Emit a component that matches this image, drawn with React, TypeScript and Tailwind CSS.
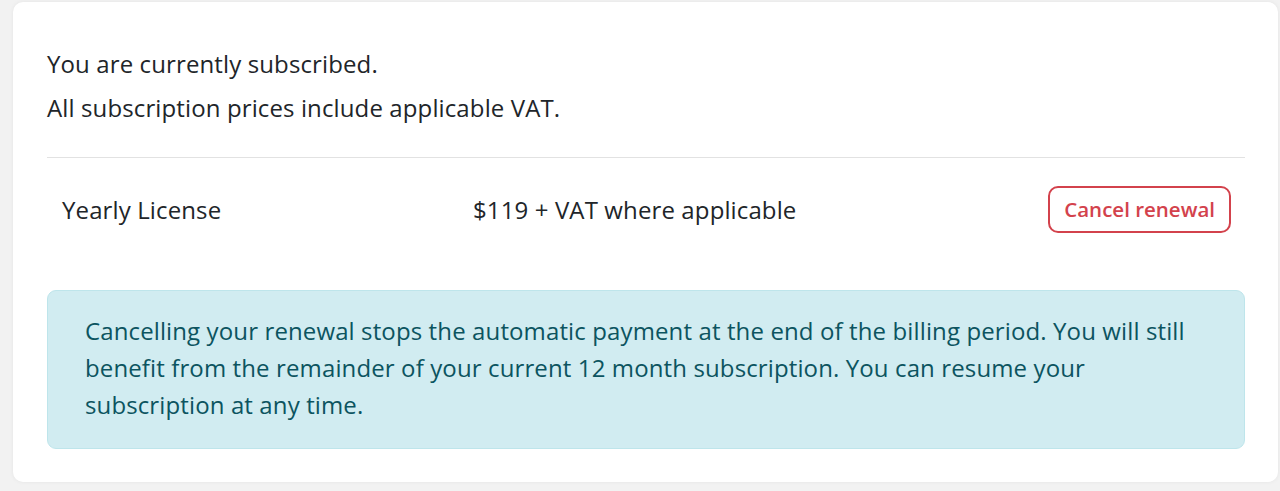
import React from 'react';

const font = { fontFamily: '"Open Sans", "Liberation Sans", sans-serif' };

export default function App() {
  return (
    <div className="min-h-screen bg-[#f2f2f2] pl-[13px] pr-[2px] pt-[2px] pb-[8px]" style={font}>
      {/* Subscription card */}
      <div className="bg-white rounded-[10px] shadow-[0_0_4px_rgba(0,0,0,0.06)] pl-[34px] pr-[33px] pt-[45px] pb-[33px] text-[#212529] tracking-[0.12px]">
        <p className="text-[24px] leading-[33px] mb-[11px]">You are currently subscribed.</p>
        <p className="text-[24px] leading-[33px]">All subscription prices include applicable VAT.</p>

        <div className="mt-[33px] border-t border-[#e2e2e2]" />

        {/* License row */}
        <div className="grid grid-cols-[411px_1fr_auto] items-center pl-[15px] pr-[14px] pt-[28px]">
          <div className="text-[24px] leading-[33px]">Yearly License</div>
          <div className="text-[24px] leading-[33px]">$119 + VAT where applicable</div>
          <button className="h-[47px] px-[14px] rounded-[10px] border-2 border-[#d3424c] text-[#d3424c] text-[20.5px] font-semibold leading-none tracking-normal">
            Cancel renewal
          </button>
        </div>

        {/* Info alert */}
        <div className="mt-[57px] rounded-[9px] border border-[#bee5eb] bg-[#d1ecf1] text-[#0c5460] pl-[37px] pr-[36px] pt-[21px] pb-[25px] text-[24px] leading-[37px]">
          Cancelling your renewal stops the automatic payment at the end of the billing period. You will still benefit from the remainder of your current 12 month subscription. You can resume your subscription at any time.
        </div>
      </div>
    </div>
  );
}
